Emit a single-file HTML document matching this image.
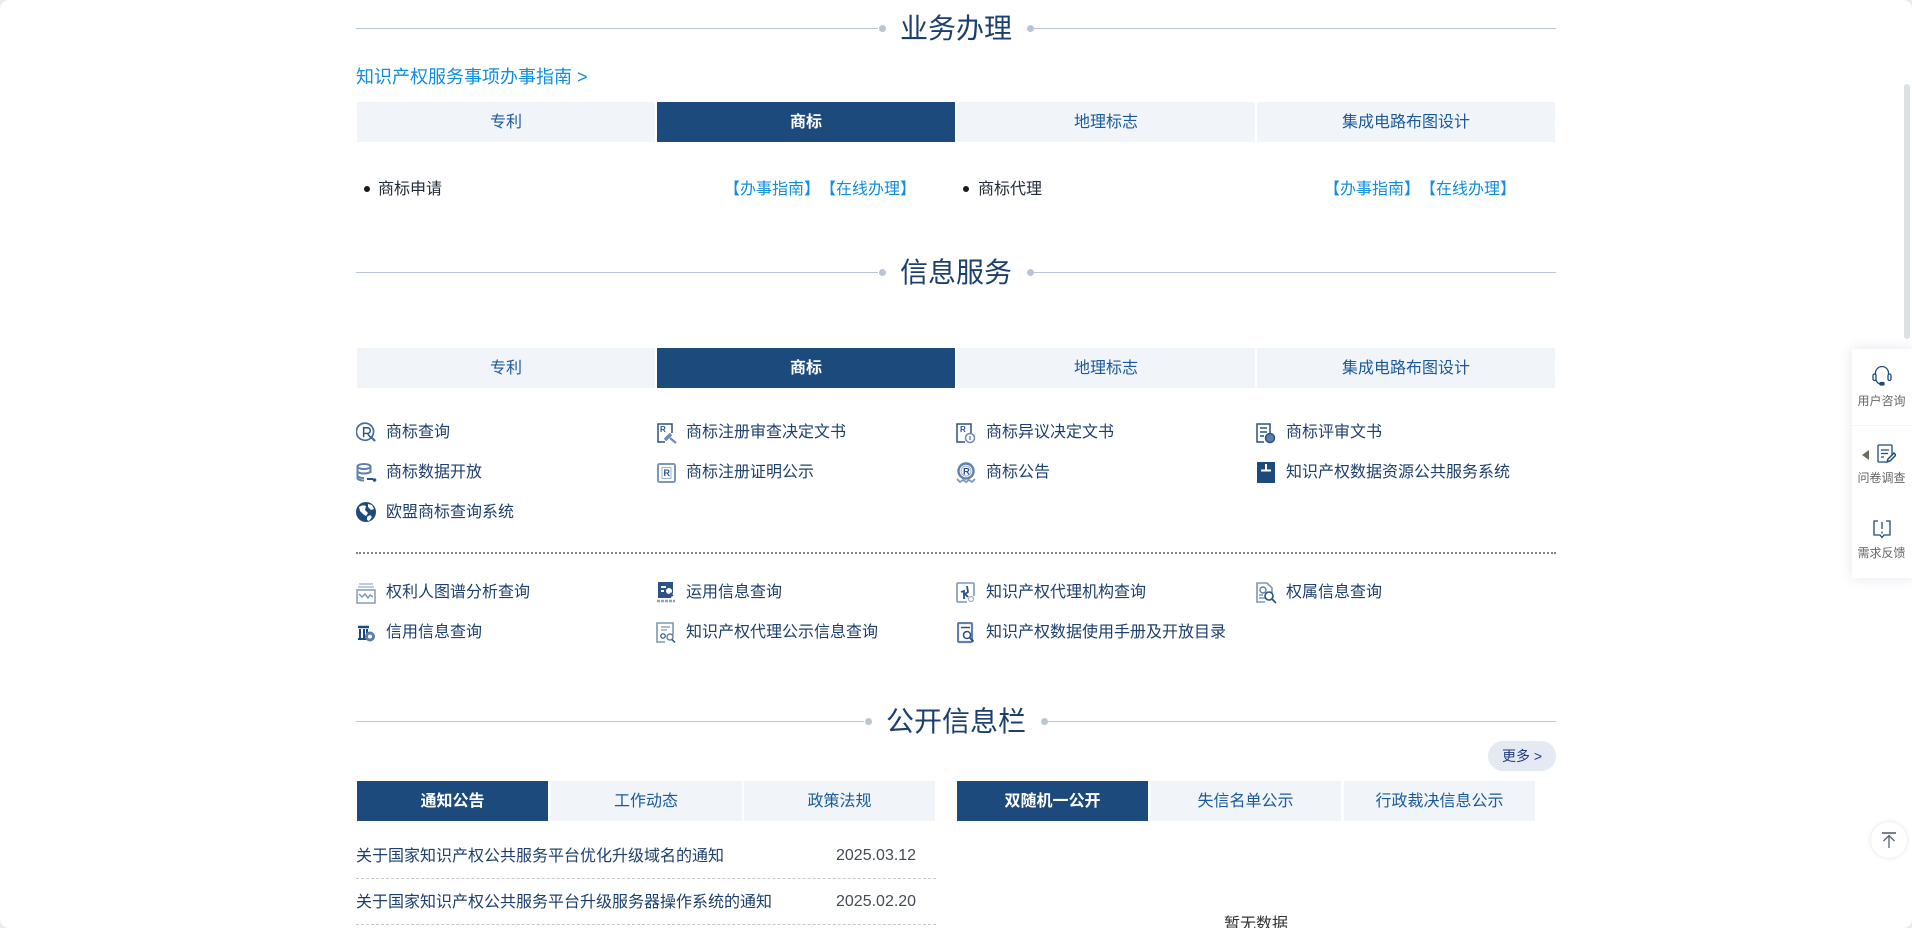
<!DOCTYPE html>
<html lang="zh-CN">
<head>
<meta charset="utf-8">
<title>业务办理</title>
<style>
html,body{margin:0;padding:0;width:1912px;height:928px;overflow:hidden;background:#ececec}
#p{position:relative;width:1912px;height:928px;overflow:hidden;background:#fff;border-radius:9px;font-family:"Liberation Sans","WenQuanYi Zen Hei","Noto Sans CJK SC",sans-serif;font-size:16px;color:#1d3f6e;text-spacing-trim:space-all}
#p div{position:absolute;white-space:nowrap}
.ln{height:1px;background:#bcc5d6}
.dot{width:7px;height:7px;border-radius:50%;background:#bcc5d6}
.tt{font-size:28px;line-height:40px;color:#1d3f6e}
.tab{height:40px;line-height:41px;background:#f1f4f9;color:#1a5a9c;text-align:center}
.on{background:#1d4a7d;color:#fff;font-weight:bold}
.t{line-height:22px;color:#1d3f6e}
.blue{line-height:22px;color:#0f8de0}
.b{width:6px;height:6px;border-radius:50%;background:#1a1a1a}
svg{position:absolute;display:block}
.s{font-size:12px;line-height:16px;color:#666;width:61px;text-align:center}
</style>
</head>
<body>
<div id="p">

<!-- 业务办理 -->
<div class="ln" style="left:356px;top:28px;width:522px"></div>
<div class="dot" style="left:879px;top:25px"></div>
<div class="tt" style="left:900px;top:9px">业务办理</div>
<div class="dot" style="left:1027px;top:25px"></div>
<div class="ln" style="left:1034px;top:28px;width:522px"></div>

<div class="blue" style="left:356px;top:66px;font-size:18px">知识产权服务事项办事指南 &gt;</div>

<div class="tab" style="left:357px;top:102px;width:298px">专利</div>
<div class="tab on" style="left:657px;top:102px;width:298px">商标</div>
<div class="tab" style="left:957px;top:102px;width:298px">地理标志</div>
<div class="tab" style="left:1257px;top:102px;width:298px">集成电路布图设计</div>

<div class="b" style="left:364px;top:186px"></div>
<div class="t" style="left:378px;top:179px;color:#222b3a">商标申请</div>
<div class="blue" style="left:724px;top:179px">【办事指南】【在线办理】</div>
<div class="b" style="left:963px;top:186px"></div>
<div class="t" style="left:978px;top:179px;color:#222b3a">商标代理</div>
<div class="blue" style="left:1324px;top:179px">【办事指南】【在线办理】</div>

<!-- 信息服务 -->
<div class="ln" style="left:356px;top:272px;width:522px"></div>
<div class="dot" style="left:879px;top:269px"></div>
<div class="tt" style="left:900px;top:253px">信息服务</div>
<div class="dot" style="left:1027px;top:269px"></div>
<div class="ln" style="left:1034px;top:272px;width:522px"></div>

<div class="tab" style="left:357px;top:348px;width:298px">专利</div>
<div class="tab on" style="left:657px;top:348px;width:298px">商标</div>
<div class="tab" style="left:957px;top:348px;width:298px">地理标志</div>
<div class="tab" style="left:1257px;top:348px;width:298px">集成电路布图设计</div>

<!-- row 1 -->
<svg style="left:356px;top:422px" width="21" height="21" viewBox="0 0 22 22" fill="none" stroke="#4a6f9c" stroke-width="1.800"><path d="M5 18A9 9 0 1 1 17 15A9 9 0 0 1 5 18"/><path d="M15 15l5 5" stroke-width="2.400"/><path d="M8 16V6h4a3 3 0 0 1 0 6H8m4 0l3 4" stroke-width="1.500" stroke="#2a5284"/></svg>
<div class="t" style="left:386px;top:422px">商标查询</div>
<svg style="left:656px;top:422px" width="22" height="22" viewBox="0 0 22 22" fill="none" stroke="#2a5284" stroke-width="1.500"><path d="M9 20H2V2h14v9"/><text x="4" y="10" font-size="8" font-weight="bold" fill="#2a5284" stroke="none" font-family="Liberation Sans">R</text><path d="M9 18l6-6" stroke="#6d8bb0" stroke-width="3.500"/><path d="M14 16l6 5" stroke="#6d8bb0" stroke-width="2.200"/></svg>
<div class="t" style="left:686px;top:422px">商标注册审查决定文书</div>
<svg style="left:956px;top:422px" width="20" height="22" viewBox="0 0 20 22" fill="none" stroke="#2a5284" stroke-width="1.500"><path d="M9 20H1V2h14v9"/><text x="4" y="10" font-size="8" font-weight="bold" fill="#2a5284" stroke="none" font-family="Liberation Sans">R</text><circle cx="14" cy="16" r="4.500" stroke="#6d8bb0"/><path d="M14 14v4" stroke="#6d8bb0"/></svg>
<div class="t" style="left:986px;top:422px">商标异议决定文书</div>
<svg style="left:1256px;top:422px" width="20" height="22" viewBox="0 0 20 22" fill="none" stroke="#2a5284" stroke-width="1.500"><path d="M8 20H1V2h13v9"/><path d="M4 6h7M4 10h7M4 14h4"/><circle cx="14" cy="16" r="4.500" fill="#5e7fa8" stroke="#2a5284"/></svg>
<div class="t" style="left:1286px;top:422px">商标评审文书</div>

<!-- row 2 -->
<svg style="left:356px;top:463px" width="22" height="20" viewBox="0 0 22 20" fill="none" stroke="#5e80aa" stroke-width="2"><ellipse cx="8" cy="3.500" rx="6.500" ry="2.500"/><path d="M1.500 3.500V15c0 1.500 3 2.500 6.500 2.500M14.500 3.500V10M1.500 8c0 1.500 3 2.500 6.500 2.500s6.500-1 6.500-2.500M1.500 12.500c0 1.500 3 2.500 6.500 2.500"/><path d="M11 16h6" stroke="#2a5284"/><circle cx="18.500" cy="17" r="1.800" fill="#2a5284" stroke="none"/></svg>
<div class="t" style="left:386px;top:462px">商标数据开放</div>
<svg style="left:657px;top:463px" width="19" height="20" viewBox="0 0 19 20" fill="none"><rect x="1" y="1" width="17" height="18" rx="1.500" stroke="#7b97b9" stroke-width="2"/><rect x="5" y="4.500" width="9" height="11" stroke="#9fb3cc" stroke-width="1"/><text x="6.500" y="13" font-size="9" font-weight="bold" fill="#2a5284" font-family="Liberation Sans">R</text></svg>
<div class="t" style="left:686px;top:462px">商标注册证明公示</div>
<svg style="left:956px;top:462px" width="20" height="22" viewBox="0 0 20 22" fill="none"><circle cx="10" cy="9" r="7.500" stroke="#5e80aa" stroke-width="2.400"/><circle cx="10" cy="9" r="5" stroke="#9fb3cc"/><text x="7" y="12.500" font-size="9.500" font-weight="bold" fill="#2a5284" font-family="Liberation Sans">R</text><path d="M1 17l3 3 3-2 3 2 3-2 3 2 3-3" stroke="#7b97b9" stroke-width="1.800"/></svg>
<div class="t" style="left:986px;top:462px">商标公告</div>
<svg style="left:1257px;top:462px" width="18" height="21" viewBox="0 0 18 21"><path d="M0 0h18v21H0z" fill="#1d4a7d"/><path d="M4 7.500h10v2H4zM8 2h2v6H8z" fill="#fff"/></svg>
<div class="t" style="left:1286px;top:462px">知识产权数据资源公共服务系统</div>

<!-- row 3 -->
<svg style="left:356px;top:502px" width="20" height="20" viewBox="0 0 20 20"><circle cx="10" cy="10" r="10" fill="#1d4a7d"/><path d="M3 5c3-2 5-2 7-1l-1 4 3 3-2 3-3-2-3-3zM12 2l4 1 2 4-3 1-3-3zM11 15l3-2 2 2-3 4-2-1z" fill="#fff"/></svg>
<div class="t" style="left:386px;top:502px">欧盟商标查询系统</div>

<!-- dashed -->
<div style="left:356px;top:552px;width:1200px;height:0;border-top:2px dotted #7d8594"></div>

<!-- row 4 -->
<svg style="left:356px;top:583px" width="20" height="21" viewBox="0 0 20 21" fill="none"><path d="M3 1h14M2 4h16" stroke="#a7b8cf" stroke-width="1.500"/><rect x="1" y="7" width="18" height="13" stroke="#8aa2c1" stroke-width="1.600"/><path d="M3 11l3 3 3-3 3 4 2-3 3 2" stroke="#7b97b9" stroke-width="1.500"/></svg>
<div class="t" style="left:386px;top:582px">权利人图谱分析查询</div>
<svg style="left:656px;top:582px" width="20" height="22" viewBox="0 0 20 22"><path d="M2 0h15v11l-2 5H2z" fill="#2a5284"/><path d="M5 4h5v2H5zM5 8h3v2H5z" fill="#fff"/><circle cx="13" cy="9" r="3" fill="#fff"/><path d="M14 11l3 3" stroke="#2a5284" stroke-width="1.500"/><path d="M1 19h18" stroke="#8aa2c1" stroke-width="2.500" stroke-dasharray="3 1"/></svg>
<div class="t" style="left:686px;top:582px">运用信息查询</div>
<svg style="left:956px;top:582px" width="20" height="22" viewBox="0 0 20 22" fill="none"><path d="M11 20H2a1 1 0 0 1-1-1V2a1 1 0 0 1 1-1h15a1 1 0 0 1 1 1v12" stroke="#7b97b9" stroke-width="1.600"/><path d="M5 10l3-1v8M11 4l1 6-3 2 3 3" stroke="#2a5284" stroke-width="1.800"/><circle cx="15" cy="17" r="2.500" stroke="#9fb3cc" stroke-width="1.300"/></svg>
<div class="t" style="left:986px;top:582px">知识产权代理机构查询</div>
<svg style="left:1256px;top:582px" width="21" height="22" viewBox="0 0 21 22" fill="none"><path d="M9 20H1V1h10l5 5v5" stroke="#7b97b9" stroke-width="1.600"/><circle cx="7" cy="8" r="3" stroke="#5e80aa" stroke-width="1.400"/><path d="M3 16h6M3 13h4" stroke="#7b97b9" stroke-width="1.500"/><circle cx="13" cy="14" r="4" stroke="#2a5284" stroke-width="1.600"/><path d="M16 17l4 4" stroke="#2a5284" stroke-width="1.800"/></svg>
<div class="t" style="left:1286px;top:582px">权属信息查询</div>

<!-- row 5 -->
<svg style="left:356px;top:623px" width="20" height="20" viewBox="0 0 20 20" fill="none"><path d="M2 4h11" stroke="#1d4a7d" stroke-width="2.500"/><path d="M4 6v9M8 6v9M11 6v5M2 16h9" stroke="#1d4a7d" stroke-width="2"/><circle cx="14" cy="13.500" r="5" fill="#5e7fa8"/><circle cx="14" cy="13.500" r="2" fill="#fff"/></svg>
<div class="t" style="left:386px;top:622px">信用信息查询</div>
<svg style="left:656px;top:622px" width="20" height="22" viewBox="0 0 20 22" fill="none"><path d="M9 20H1V1h16v12" stroke="#7b97b9" stroke-width="1.600"/><path d="M5 5h9M5 8h6" stroke="#7b97b9" stroke-width="1.200"/><circle cx="7" cy="14" r="2.200" stroke="#2a5284" stroke-width="1.200"/><circle cx="14" cy="15" r="3" stroke="#5e80aa" stroke-width="1.400"/><path d="M16 17.500l3 3" stroke="#2a5284" stroke-width="1.500"/></svg>
<div class="t" style="left:686px;top:622px">知识产权代理公示信息查询</div>
<svg style="left:957px;top:622px" width="19" height="22" viewBox="0 0 19 22" fill="none"><rect x="1" y="1" width="14" height="19" rx="1" stroke="#5e80aa" stroke-width="2.200"/><path d="M4 5.500h9" stroke="#2a5284" stroke-width="1.500"/><circle cx="10" cy="13" r="3.500" stroke="#2a5284" stroke-width="1.500" fill="#fff"/><path d="M12.500 15.500l4 4" stroke="#2a5284" stroke-width="1.800"/></svg>
<div class="t" style="left:986px;top:622px">知识产权数据使用手册及开放目录</div>

<!-- 公开信息栏 -->
<div class="ln" style="left:356px;top:721px;width:508px"></div>
<div class="dot" style="left:865px;top:718px"></div>
<div class="tt" style="left:886px;top:702px">公开信息栏</div>
<div class="dot" style="left:1041px;top:718px"></div>
<div class="ln" style="left:1048px;top:721px;width:508px"></div>

<div style="left:1488px;top:741px;width:68px;height:30px;border-radius:15px;background:#e4e9f3;line-height:30px;text-align:center;font-size:14px;color:#1e3a7a">更多 &gt;</div>

<div class="tab on" style="left:357px;top:781px;width:191px">通知公告</div>
<div class="tab" style="left:550px;top:781px;width:192px">工作动态</div>
<div class="tab" style="left:744px;top:781px;width:191px">政策法规</div>
<div class="tab on" style="left:957px;top:781px;width:191px">双随机一公开</div>
<div class="tab" style="left:1150px;top:781px;width:191px">失信名单公示</div>
<div class="tab" style="left:1344px;top:781px;width:191px">行政裁决信息公示</div>

<div class="t" style="left:356px;top:846px">关于国家知识产权公共服务平台优化升级域名的通知</div>
<div class="t" style="left:836px;top:845px;color:#444b57">2025.03.12</div>
<div style="left:356px;top:878px;width:580px;height:0;border-top:1px dashed #c8c8c8"></div>
<div class="t" style="left:356px;top:892px">关于国家知识产权公共服务平台升级服务器操作系统的通知</div>
<div class="t" style="left:836px;top:891px;color:#444b57">2025.02.20</div>
<div style="left:356px;top:924px;width:580px;height:0;border-top:1px dashed #c8c8c8"></div>

<div class="t" style="left:1224px;top:914px;color:#333">暂无数据</div>

<!-- scrollbar -->
<div style="left:1904px;top:84px;width:6px;height:255px;border-radius:3px;background:#dcdfe3"></div>

<!-- side widget -->
<div style="left:1852px;top:349px;width:60px;height:229px;background:#fff;box-shadow:0 0 12px rgba(60,80,120,.14)"></div>
<div style="left:1852px;top:425px;width:60px;height:1px;background:#f5f5f5"></div>
<svg style="left:1872px;top:366px" width="20" height="22" viewBox="0 0 20 22" fill="none" stroke="#1d4a7d" stroke-width="1.300"><path d="M3.500 9V7a6.500 6.500 0 0 1 13 0v2"/><rect x="1" y="8" width="3" height="6.500" rx="1.500"/><rect x="16" y="8" width="3" height="6.500" rx="1.500"/><path d="M4 14c1 3 3 4 5 4"/><rect x="8" y="16.500" width="4" height="2.500" rx="1" fill="#1d4a7d"/></svg>
<div class="s" style="left:1851px;top:393px">用户咨询</div>
<svg style="left:1862px;top:450px" width="8" height="10" viewBox="0 0 8 10"><path d="M7 0v10L0 5z" fill="#6e6a62"/></svg>
<svg style="left:1876px;top:444px" width="20" height="20" viewBox="0 0 20 20" fill="none" stroke="#1d4a7d" stroke-width="1.300"><path d="M10 18H3a1 1 0 0 1-1-1V2a1 1 0 0 1 1-1h12a1 1 0 0 1 1 1v8"/><path d="M5 6h8M5 9.500h7M5 13h3"/><path d="M11 18l1-3 6-6 2 2-6 6z" stroke-width="1.500"/></svg>
<div class="s" style="left:1851px;top:470px">问卷调查</div>
<svg style="left:1872px;top:520px" width="20" height="20" viewBox="0 0 20 20" fill="none" stroke="#1d4a7d" stroke-width="1.300"><path d="M6 1H2v14h6l2 2.500 2-2.500h6V1h-4"/><path d="M10 2v7M10 11.500v2"/></svg>
<div class="s" style="left:1851px;top:545px">需求反馈</div>

<!-- back to top -->
<div style="left:1871px;top:822px;width:36px;height:36px;border-radius:50%;background:#fff;box-shadow:0 0 4px rgba(0,0,0,.12)"></div>
<svg style="left:1880px;top:831px" width="18" height="18" viewBox="0 0 18 18" fill="none" stroke="#5a5e70" stroke-width="1.300"><path d="M2 2h14" stroke-width="1.600"/><path d="M9 17V4M3.500 10L9 4.500 14.500 10"/></svg>

</div>
</body>
</html>
